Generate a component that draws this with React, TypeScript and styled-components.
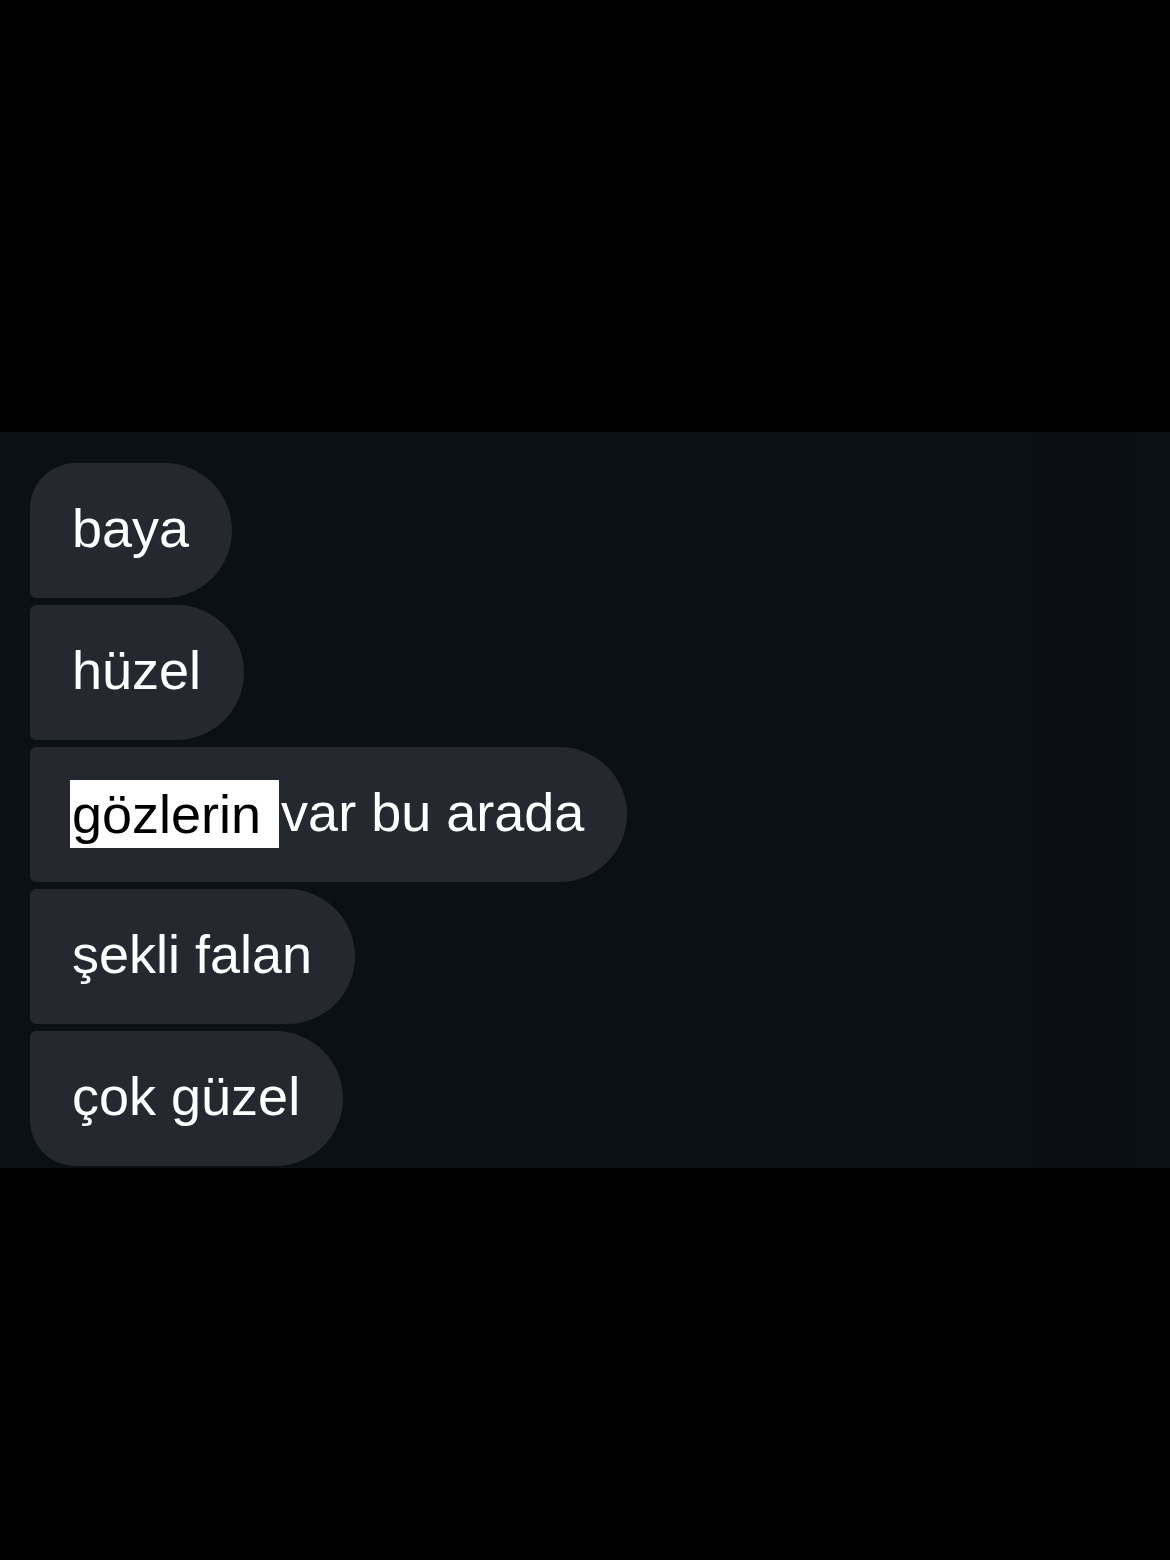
import React from 'react';
import styled, { createGlobalStyle } from 'styled-components';

const GlobalStyle = createGlobalStyle`
  html, body {
    margin: 0;
    padding: 0;
    background: #000000;
  }
  body {
    font-family: "Liberation Sans", Arial, sans-serif;
  }
`;

const Screen = styled.div`
  width: 1170px;
  height: 1560px;
  background: #000000;
  display: flex;
  flex-direction: column;
  padding-top: 432px;
  box-sizing: border-box;
`;

const ChatPanel = styled.div`
  height: 736px;
  background: linear-gradient(90deg, #0b0f16 0%, #0b0f16 86%, #0b0f15 92%, #0b0f16 100%);
  display: flex;
  flex-direction: column;
  align-items: flex-start;
  gap: 7px;
  padding: 31px 0 0 30px;
  box-sizing: border-box;
`;

type Place = 'first' | 'middle' | 'last';

const radii: Record<Place, string> = {
  first: '46px 68px 68px 6px',
  middle: '6px 68px 68px 6px',
  last: '6px 68px 68px 46px',
};

const Bubble = styled.div<{ $place: Place }>`
  height: 135px;
  box-sizing: border-box;
  display: flex;
  align-items: center;
  padding: 0 43px 5px 42px;
  background: #25282e;
  border-radius: ${p => radii[p.$place]};
  color: #ffffff;
  font-size: 54px;
  white-space: nowrap;
`;

const Selected = styled.span`
  display: inline-block;
  background: #ffffff;
  color: #000000;
  line-height: 68px;
  margin: 5px 2px 0 -2px;
  padding: 0 3px 0 2px;
  position: relative;
  top: -1px;
`;

const messages = ['baya', 'hüzel', null, 'şekli falan', 'çok güzel'];

const App: React.FC = () => {
  return (
    <>
      <GlobalStyle />
      <Screen>
        <ChatPanel>
          {messages.map((text, i) => {
            const place: Place = i === 0 ? 'first' : i === messages.length - 1 ? 'last' : 'middle';
            return (
              <Bubble key={i} $place={place}>
                {text ?? (
                  <>
                    <Selected>gözlerin&nbsp;</Selected>
                    var bu arada
                  </>
                )}
              </Bubble>
            );
          })}
        </ChatPanel>
      </Screen>
    </>
  );
};

export default App;
